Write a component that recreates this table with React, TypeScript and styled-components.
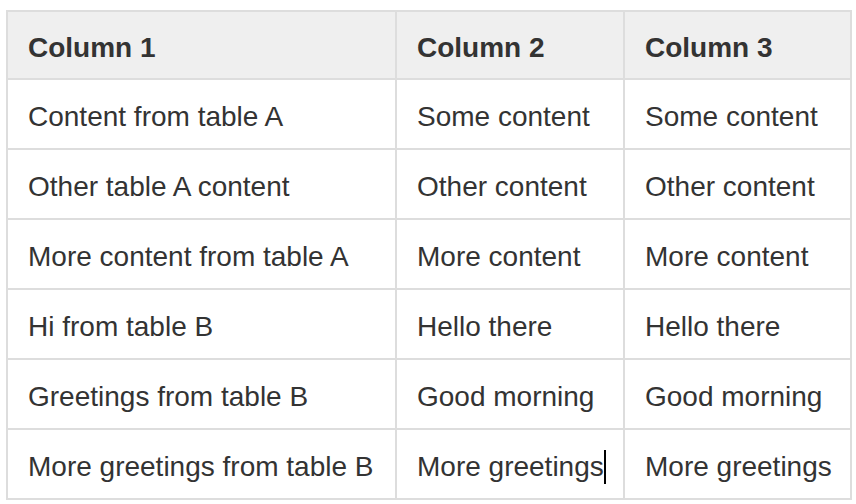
import React from "react";
import styled, { createGlobalStyle } from "styled-components";

const GlobalStyle = createGlobalStyle`
  html, body {
    margin: 0;
    padding: 0;
    background: #ffffff;
  }
  body {
    font-family: "Liberation Sans", Arial, Helvetica, sans-serif;
  }
`;

const Page = styled.div`
  padding: 10px 0 0 6px;
`;

const Table = styled.table`
  border-collapse: separate;
  border-spacing: 0;
  border-top: 2px solid #dddddd;
  border-left: 2px solid #dddddd;
  table-layout: fixed;
  width: 846px;
  font-family: "Liberation Sans", Arial, Helvetica, sans-serif;
  font-size: 28px;
  color: #333333;
`;

const HeaderCell = styled.th`
  background: #efefef;
  font-weight: bold;
  text-align: left;
  height: 68px;
  padding: 6px 0 0 20px;
  border-right: 2px solid #dddddd;
  border-bottom: 2px solid #dddddd;
  box-sizing: border-box;
  white-space: nowrap;
  vertical-align: middle;
`;

const Cell = styled.td`
  background: #ffffff;
  height: 70px;
  padding: 6px 0 0 20px;
  border-right: 2px solid #dddddd;
  border-bottom: 2px solid #dddddd;
  box-sizing: border-box;
  white-space: nowrap;
  vertical-align: middle;
`;

const Caret = styled.span`
  display: inline-block;
  width: 2px;
  height: 34px;
  background: #000000;
  vertical-align: -8px;
`;

const rows: [string, string, string][] = [
  ["Content from table A", "Some content", "Some content"],
  ["Other table A content", "Other content", "Other content"],
  ["More content from table A", "More content", "More content"],
  ["Hi from table B", "Hello there", "Hello there"],
  ["Greetings from table B", "Good morning", "Good morning"],
  ["More greetings from table B", "More greetings", "More greetings"],
];

export default function App() {
  return (
    <>
      <GlobalStyle />
      <Page>
        <Table>
          <colgroup>
            <col style={{ width: 389 }} />
            <col style={{ width: 228 }} />
            <col style={{ width: 227 }} />
          </colgroup>
          <thead>
            <tr>
              <HeaderCell>Column 1</HeaderCell>
              <HeaderCell>Column 2</HeaderCell>
              <HeaderCell>Column 3</HeaderCell>
            </tr>
          </thead>
          <tbody>
            {rows.map((r, i) => (
              <tr key={i}>
                <Cell>{r[0]}</Cell>
                <Cell>
                  {r[1]}
                  {i === rows.length - 1 && <Caret />}
                </Cell>
                <Cell>{r[2]}</Cell>
              </tr>
            ))}
          </tbody>
        </Table>
      </Page>
    </>
  );
}
